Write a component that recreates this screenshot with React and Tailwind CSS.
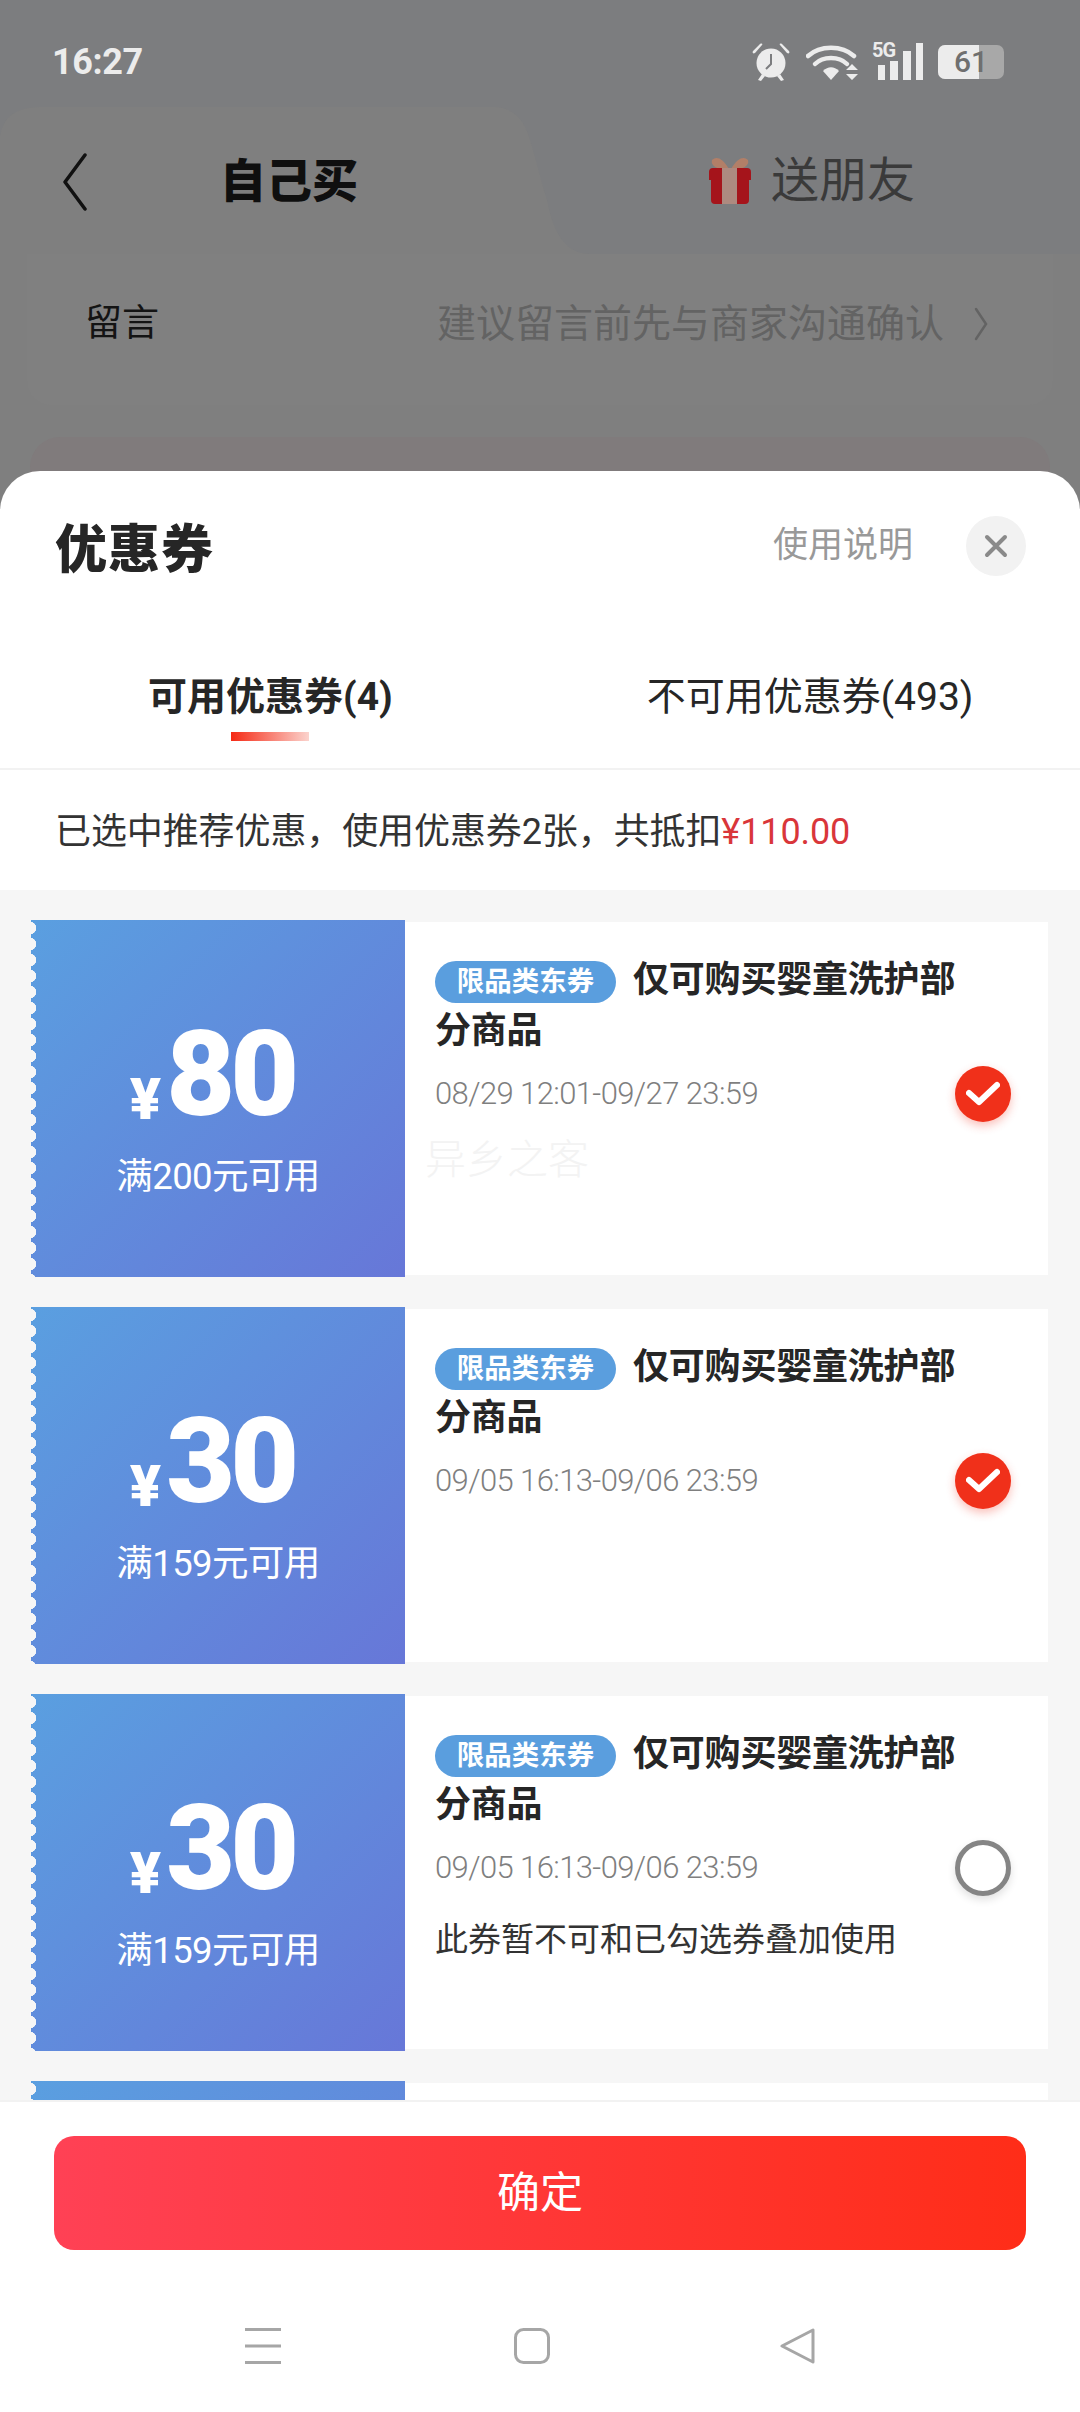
import React from "react";

const sans = "font-['Roboto','Noto_Sans_CJK_SC',sans-serif]";

function Coupon({ amount, cond, date, checked, note }) {
  return (
    <div className="flex h-[357px] shrink-0 items-center pl-[31px]">
      <div className="relative flex h-[357px] w-[374px] shrink-0 flex-col items-center bg-[linear-gradient(135deg,#5a9fe0,#6777d8)] text-white">
        <div className="absolute left-[-1px] top-0 h-full w-[7px] bg-[radial-gradient(circle_at_0_50%,#f6f6f6_6px,transparent_6.5px)] bg-[length:7px_16px]" />
        <div className="mt-[95px] flex h-[120px] items-end pr-[12px]">
          <span className="mb-[11px] mr-[5px] text-[58px] leading-[50px] font-black">¥</span>
          <span className="text-[119px] leading-[120px] font-black tracking-[-5px]">{amount}</span>
        </div>
        <div className="mt-[20px] text-[36.5px] leading-[44px] tracking-[-0.6px]">{cond}</div>
      </div>
      <div className="flex h-[353px] w-[643px] shrink-0 flex-col bg-white pl-[30px] pr-[37px] pt-[33px]">
        <p className="w-[535px] text-[36px] leading-[51px] font-bold tracking-[-0.2px] text-[#262626]">
          <span className="mr-[17px] inline-flex h-[42px] w-[181px] items-center justify-center rounded-full bg-[#5a9ede] align-[1px] text-[27.5px] font-bold leading-[42px] tracking-normal text-white">
            限品类东券
          </span>
          仅可购买婴童洗护部分商品
        </p>
        <div className="mt-[9px] flex h-[56px] items-center justify-between">
          <span className="text-[31px] font-light tracking-[-0.6px] text-[#7f7f7f]">{date}</span>
          {checked ? (
            <span className="flex h-[56px] w-[56px] items-center justify-center rounded-full bg-[#f0301a] shadow-[0_4px_10px_rgba(240,48,26,0.3)]">
              <svg width="34" height="26" viewBox="0 0 34 26" fill="none">
                <path d="M3 12 L13 21 L31 4" stroke="#fff" strokeWidth="6" strokeLinecap="round" strokeLinejoin="round" />
              </svg>
            </span>
          ) : (
            <span className="h-[56px] w-[56px] rounded-full border-[5px] border-[#858585] bg-white shadow-[0_4px_8px_rgba(0,0,0,0.12)]" />
          )}
        </div>
        {note && <div className="mt-[22px] text-[33px] leading-[44px] text-[#333]">{note}</div>}
      </div>
    </div>
  );
}

export default function App() {
  return (
    <div className={`relative flex h-[2412px] w-[1080px] flex-col overflow-hidden bg-white ${sans}`}>
      {/* dimmed page behind the sheet */}
      <div className="relative -mb-[40px] h-[511px] shrink-0 overflow-hidden bg-[#7f7f7f]">
        <div className="flex h-[107px] items-start justify-between bg-[#7c7d7f] pl-[52px] pr-[76px] pt-[41px]">
          <span className="text-[36px] leading-[42px] font-bold tracking-[-0.4px] text-[#ececec]">16:27</span>
          <div className="flex items-start pt-[2px]">
            <svg width="38" height="38" viewBox="0 0 38 38" fill="#ececec">
              <path d="M1 8 L8 1 C10 0 11 1 10 2 L3 10 C1 11 0 10 1 8Z M37 8 L30 1 C28 0 27 1 28 2 L35 10 C37 11 38 10 37 8Z" />
              <circle cx="19" cy="20" r="14.5" />
              <path d="M6 37 L10 31 L13 33 L9 38Z M32 37 L28 31 L25 33 L29 38Z" />
              <path d="M19 11 V21 L14 26" stroke="#7c7d7f" strokeWidth="2" fill="none" />
            </svg>
            <svg className="ml-[16px] mt-[1px]" width="52" height="37" viewBox="0 0 52 37" fill="none" stroke="#ececec" strokeWidth="4.5" strokeLinecap="round">
              <path d="M2 12 C14 1 36 1 48 12" />
              <path d="M9 20 C17 12 33 12 41 20" />
              <path d="M17 27 L25 36 L33 27 C28 22 22 22 17 27Z" fill="#ececec" stroke="none" />
              <path d="M40 26 L46 20 L52 26Z M40 30 L46 36 L52 30Z" fill="#ececec" stroke="none" />
            </svg>
            <div className="relative ml-[14px] h-[37px] w-[52px]">
              <span className="absolute left-0 top-[-3px] text-[20px] leading-[20px] font-bold tracking-[-1px] text-[#ececec]">5G</span>
              <svg className="absolute left-[6px] top-0" width="46" height="37" viewBox="0 0 46 37" fill="#ececec">
                <rect x="0" y="22" width="7" height="15" />
                <rect x="12" y="18" width="8" height="19" />
                <rect x="25" y="8" width="8" height="29" />
                <rect x="38" y="0" width="7" height="37" />
              </svg>
            </div>
            <div className="relative ml-[14px] mt-[2px] flex h-[34px] w-[66px] overflow-hidden rounded-[7px] bg-[#a8a8a8]">
              <div className="h-full w-[41px] bg-[#ececec]" />
              <span className="absolute left-[16px] top-0 text-[30px] leading-[34px] font-medium text-[#6f6f6f]">61</span>
            </div>
          </div>
        </div>

        <div className="relative flex h-[147px] items-center bg-[#7c7d7f]">
          <svg className="absolute left-0 top-0" width="600" height="147" viewBox="0 0 600 147" fill="#7f7f7f">
            <path d="M0 147 V30 Q4 0 40 0 H493 C515 0 525 15 530 33 C538 60 540 70 547 93 C553 125 565 147 590 147Z" />
          </svg>
          <svg className="relative ml-[62px] mt-[3px]" width="26" height="58" viewBox="0 0 26 58" fill="none">
            <path d="M23 2 L3 29 L23 56" stroke="#111" strokeWidth="3.5" strokeLinecap="round" strokeLinejoin="round" />
          </svg>
          <span className="relative ml-[132px] text-[46px] leading-[60px] font-black text-[#0f0f0f]">自己买</span>
          <svg className="relative ml-[349px]" width="46" height="50" viewBox="0 0 46 50">
            <path d="M22 13 C15 1 9 0 5 4 C3 11 13 14 22 13Z M24 13 C31 1 37 0 41 4 C43 11 33 14 24 13Z" fill="#b27f68" />
            <path d="M2 16 Q2 12 6 12 H40 Q44 12 44 16 V24 H42 V44 Q42 48 38 48 H8 Q4 48 4 44 V24 H2Z" fill="#a5141b" />
            <rect x="15" y="12" width="15" height="36" fill="#ad8a80" />
          </svg>
          <span className="relative ml-[18px] text-[48px] leading-[60px] text-[#3a3a3a]">送朋友</span>
        </div>

        <div className="mx-[27px] flex h-[151px] items-center justify-between rounded-b-[24px] bg-[#808080] pb-[11px] pl-[58px] pr-[65px]">
          <span className="text-[37px] text-[#141414]">留言</span>
          <span className="flex items-center text-[39px] text-[#636363]">
            建议留言前先与商家沟通确认
            <svg className="ml-[30px]" width="14" height="34" viewBox="0 0 14 34" fill="none">
              <path d="M2 2 L12 17 L2 32" stroke="#636363" strokeWidth="2.5" strokeLinecap="round" />
            </svg>
          </span>
        </div>
        <div className="mx-[30px] mt-[32px] h-[80px] rounded-t-[30px] bg-[#807b7c]" />
      </div>

      {/* sheet */}
      <div className="relative z-10 flex min-h-0 flex-1 flex-col rounded-t-[40px] bg-white">
        <div className="flex h-[169px] shrink-0 items-start justify-between pl-[55px] pr-[54px] pt-[45px]">
          <span className="mt-[2px] text-[52px] leading-[66px] font-black tracking-[1px] text-[#262626]">优惠券</span>
          <div className="flex items-center">
            <span className="text-[35px] leading-[60px] text-[#999]">使用说明</span>
            <span className="ml-[53px] flex h-[60px] w-[60px] items-center justify-center rounded-full bg-[#f2f2f2]">
              <svg width="26" height="26" viewBox="0 0 26 26" fill="none">
                <path d="M4 4 L22 22 M22 4 L4 22" stroke="#8a8a8a" strokeWidth="4" strokeLinecap="round" />
              </svg>
            </span>
          </div>
        </div>

        <div className="flex h-[130px] shrink-0 items-start border-b-[2px] border-[#f2f2f2] pl-[148px] pt-[29px] text-[#262626]">
          <div className="flex flex-col items-center">
            <span className="h-[63px] text-[39px] leading-[56px] font-bold">可用优惠券(4)</span>
            <span className="h-[9px] w-[78px] bg-[linear-gradient(90deg,#f52a15,#fbd3cd)]" />
          </div>
          <span className="ml-[254px] text-[39px] leading-[56px]">不可用优惠券(493)</span>
        </div>

        <div className="flex h-[120px] shrink-0 items-center pl-[55px] pt-[4px] text-[36px] tracking-[-0.1px] text-[#333]">
          已选中推荐优惠，使用优惠券2张，共抵扣<span className="text-[#d9363a]">¥110.00</span>
        </div>

        <div className="flex min-h-0 flex-1 flex-col gap-[30px] overflow-hidden bg-[#f6f6f6] pt-[30px]">
          <Coupon amount="80" cond="满200元可用" date="08/29 12:01-09/27 23:59" checked />
          <Coupon amount="30" cond="满159元可用" date="09/05 16:13-09/06 23:59" checked />
          <Coupon amount="30" cond="满159元可用" date="09/05 16:13-09/06 23:59" note="此券暂不可和已勾选券叠加使用" />
          <Coupon amount="30" cond="满159元可用" date="09/05 16:13-09/06 23:59" />
        </div>

        <div className="flex h-[312px] shrink-0 flex-col border-t-[2px] border-[#f2f2f2] bg-white">
          <div className="mx-[54px] mt-[34px] flex h-[114px] shrink-0 items-center justify-center rounded-[20px] bg-[linear-gradient(90deg,#ff4155,#ff2d18)] text-[43px] text-white">
            确定
          </div>
          <div className="relative mt-[78px] flex h-[36px] items-center pl-[245px]">
            <svg width="36" height="36" viewBox="0 0 36 36" stroke="#a6a6a6" strokeWidth="3">
              <path d="M0 1.5 H36 M0 18 H36 M0 34.5 H36" />
            </svg>
            <svg className="ml-[233px]" width="36" height="36" viewBox="0 0 36 36" fill="none" stroke="#a6a6a6" strokeWidth="3">
              <rect x="1.5" y="1.5" width="33" height="33" rx="8" />
            </svg>
            <svg className="ml-[230px]" width="36" height="36" viewBox="0 0 36 36" fill="none" stroke="#a6a6a6" strokeWidth="3" strokeLinejoin="round">
              <path d="M33 2 V34 L2 18Z" />
            </svg>
          </div>
        </div>

        <span className="pointer-events-none absolute left-[425px] top-[665px] text-[41px] leading-[48px] font-light text-[#f3f3f3]">异乡之客</span>
      </div>
    </div>
  );
}
